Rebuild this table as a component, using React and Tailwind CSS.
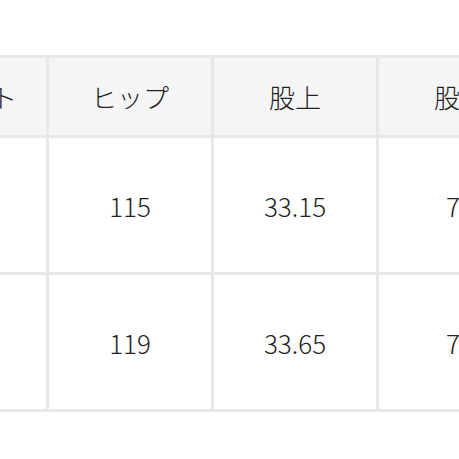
import React from 'react';

const headers = ['ウエスト', 'ヒップ', '股上', '股下'];
const rows = [
    ['84', '115', '33.15', '76'],
    ['88', '119', '33.65', '77'],
];

const App = () => {
    return (
        <div
            className="w-[459px] h-[459px] overflow-hidden bg-white pt-[55px]"
            style={{ fontFamily: '"Noto Sans CJK JP", "Noto Sans", sans-serif' }}
        >
            <div className="ml-[-119px] w-max border-t-[3px] border-l-[3px] border-[#e8e8e8]">
                {/* Header */}
                <div className="flex bg-[#f5f5f5]">
                    {headers.map((h) => (
                        <div
                            key={h}
                            className="w-[165px] h-[80px] shrink-0 flex items-center justify-center border-r-[3px] border-b-[3px] border-[#e8e8e8] text-[26px] font-light text-[#222]"
                        >
                            {h}
                        </div>
                    ))}
                </div>
                {rows.map((r, i) => (
                    <div key={i} className="flex bg-white">
                        {r.map((v, j) => (
                            <div
                                key={j}
                                className="w-[165px] h-[137px] shrink-0 flex items-center justify-center border-r-[3px] border-b-[3px] border-[#e8e8e8] text-[26px] font-light text-[#222]"
                            >
                                {v}
                            </div>
                        ))}
                    </div>
                ))}
            </div>
        </div>
    );
};

export default App;
